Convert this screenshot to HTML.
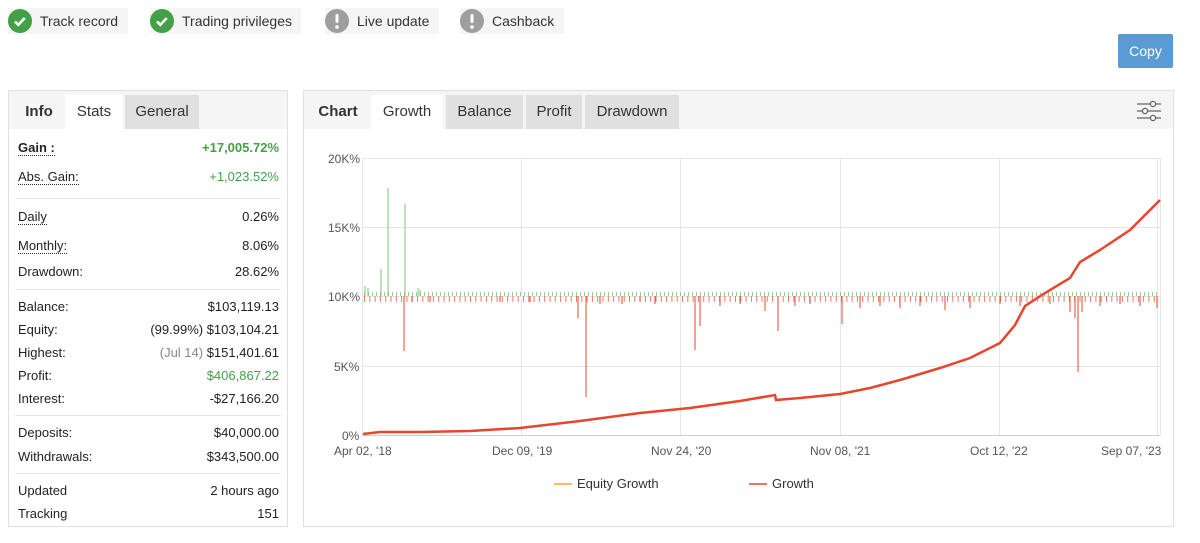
<!DOCTYPE html>
<html><head><meta charset="utf-8"><style>
*{box-sizing:border-box;margin:0;padding:0}
body{width:1200px;height:543px;background:#fff;font-family:"Liberation Sans",sans-serif;color:#222;position:relative;overflow:hidden}
.badge{position:absolute;top:8px;height:26px;background:#f5f5f5;font-size:14px;line-height:26px;padding-left:32px;color:#333}
.badge i{position:absolute;left:0;top:1px;width:24px;height:24px;border-radius:50%}
.ok i{background:#43a047}
.warn i{background:#9e9e9e}
.copy{position:absolute;left:1118px;top:34px;width:55px;height:34px;background:#5b9bd5;color:#fff;font-size:14px;text-align:center;line-height:34px;border-radius:2px}
.panel{position:absolute;border:1px solid #e0e0e0;background:#fff}
.hdr{position:absolute;left:0;top:0;right:0;height:38px;background:#f5f5f5}
.tab{position:absolute;top:4px;height:34px;line-height:34px;font-size:15px;text-align:center;color:#333}
.act{background:#fff}
.gray{background:#e0e0e0}
.r{position:absolute;left:9px;width:261px;font-size:13px;line-height:16px}
.r .v{position:absolute;right:0;top:0}
.u{border-bottom:1px dotted #333}
.g{color:#43a047}
.hr{position:absolute;left:6px;width:266px;height:1px;background:#e6e6e6}
.ax{position:absolute;font-size:12px;color:#555}
</style></head><body>
<div class="badge ok" style="left:8px;width:120px"><i><svg width="24" height="24"><path d="M7 12.5l3.3 3.3 6.5-6.8" stroke="#fff" stroke-width="2.6" fill="none"/></svg></i>Track record</div>
<div class="badge ok" style="left:150px;width:151px"><i><svg width="24" height="24"><path d="M7 12.5l3.3 3.3 6.5-6.8" stroke="#fff" stroke-width="2.6" fill="none"/></svg></i>Trading privileges</div>
<div class="badge warn" style="left:325px;width:114px"><i><svg width="24" height="24"><rect x="10.5" y="5" width="3" height="9" rx="1.2" fill="#fff"/><circle cx="12" cy="18" r="1.8" fill="#fff"/></svg></i>Live update</div>
<div class="badge warn" style="left:460px;width:104px"><i><svg width="24" height="24"><rect x="10.5" y="5" width="3" height="9" rx="1.2" fill="#fff"/><circle cx="12" cy="18" r="1.8" fill="#fff"/></svg></i>Cashback</div>
<div class="copy">Copy</div>

<div class="panel" style="left:8px;top:90px;width:280px;height:437px">
<div class="hdr">
<div class="tab" style="left:4px;width:52px;font-weight:bold">Info</div>
<div class="tab act" style="left:56px;width:58px">Stats</div>
<div class="tab gray" style="left:116px;width:74px">General</div>
</div>
<div class="r" style="top:49px"><b class="u">Gain :</b><b class="v g">+17,005.72%</b></div>
<div class="r" style="top:78px"><span class="u">Abs. Gain:</span><span class="v g">+1,023.52%</span></div>
<div class="hr" style="top:107px"></div>
<div class="r" style="top:118px"><span class="u">Daily</span><span class="v">0.26%</span></div>
<div class="r" style="top:147px"><span class="u">Monthly:</span><span class="v">8.06%</span></div>
<div class="r" style="top:173px">Drawdown:<span class="v">28.62%</span></div>
<div class="hr" style="top:198px"></div>
<div class="r" style="top:208px">Balance:<span class="v">$103,119.13</span></div>
<div class="r" style="top:231px">Equity:<span class="v">(99.99%) $103,104.21</span></div>
<div class="r" style="top:254px">Highest:<span class="v"><span style="color:#888">(Jul 14)</span> $151,401.61</span></div>
<div class="r" style="top:277px">Profit:<span class="v g">$406,867.22</span></div>
<div class="r" style="top:300px">Interest:<span class="v">-$27,166.20</span></div>
<div class="hr" style="top:324px"></div>
<div class="r" style="top:334px">Deposits:<span class="v">$40,000.00</span></div>
<div class="r" style="top:358px">Withdrawals:<span class="v">$343,500.00</span></div>
<div class="hr" style="top:382px"></div>
<div class="r" style="top:392px">Updated<span class="v">2 hours ago</span></div>
<div class="r" style="top:415px">Tracking<span class="v">151</span></div>
</div>

<div class="panel" style="left:303px;top:90px;width:871px;height:437px">
<div class="hdr">
<div class="tab" style="left:6px;width:56px;font-weight:bold">Chart</div>
<div class="tab act" style="left:67px;width:72px">Growth</div>
<div class="tab gray" style="left:142px;width:77px">Balance</div>
<div class="tab gray" style="left:222px;width:56px">Profit</div>
<div class="tab gray" style="left:281px;width:94px">Drawdown</div>
<svg style="position:absolute;left:832px;top:9px" width="26" height="22"><g stroke="#666" stroke-width="1.3" fill="#f5f5f5"><path d="M1 4h24M1 11h24M1 18h24"/><circle cx="17" cy="4" r="2.6"/><circle cx="9" cy="11" r="2.6"/><circle cx="17" cy="18" r="2.6"/></g></svg>
</div>
</div>
<div class="ax" style="left:328px;top:152px">20K%</div>
<div class="ax" style="left:328px;top:221px">15K%</div>
<div class="ax" style="left:328px;top:290px">10K%</div>
<div class="ax" style="left:334px;top:360px">5K%</div>
<div class="ax" style="left:342px;top:429px">0%</div>
<div class="ax" style="left:334px;top:444px">Apr 02, '18</div>
<div class="ax" style="left:492px;top:444px">Dec 09, '19</div>
<div class="ax" style="left:651px;top:444px">Nov 24, '20</div>
<div class="ax" style="left:810px;top:444px">Nov 08, '21</div>
<div class="ax" style="left:970px;top:444px">Oct 12, '22</div>
<div class="ax" style="left:1101px;top:444px">Sep 07, '23</div>
<svg style="position:absolute;left:0;top:0" width="1200" height="543">
<g stroke="#e6e6e6" stroke-width="1" fill="none">
<path d="M362.5 158v277M521.5 158v277M680.5 158v277M840.5 158v277M999.5 158v277M1157.5 158v277M1160.5 158v277"/>
<path d="M362 158.5h798M362 227.5h798M362 296.5h798M362 366.5h798"/>
</g>
<path d="M362 435.5h798" stroke="#ccc"/>
<path d="M364 294h795" stroke="#7cc576" stroke-width="4" stroke-dasharray="1 3" opacity=".8"/>
<path d="M364 299h795" stroke="#e8452c" stroke-width="6" stroke-dasharray="1 4.3" opacity=".7"/>
<path d="M365 296v-10M368 296v-8M381 296v-27M388 296v-108M405 296v-92M418 296v-8M420 296v-6" stroke="#7cc576"/>
<path d="M404 296v55M412 296v6M430 296v6M500 296v6M530 296v6M578 296v22M586 296v101M600 296v8M622 296v8M640 296v6M655 296v8M695 296v54M700 296v30M720 296v10M740 296v8M765 296v15M778 296v35M795 296v10M810 296v8M842 296v28M860 296v12M880 296v10M900 296v12M920 296v10M945 296v14M970 296v12M1000 296v8M1020 296v10M1050 296v8M1070 296v16M1075 296v22M1078 296v76M1082 296v16M1100 296v10M1120 296v8M1140 296v10M1157 296v12" stroke="#e8452c"/>
<path d="M363 434L380 432L420 432L470 431L520 428L580 421L640 413L690 408L740 401L775 395L776 400L800 398L840 394L870 388L900 380L940 368L970 358L1000 343L1015 325L1025 306L1045 293L1070 278L1080 262L1100 250L1130 230L1150 210L1160 200" stroke="#e8452c" stroke-width="2.5" fill="none"/>
<path d="M554 484h18" stroke="#f5a623" stroke-width="1.5"/>
<path d="M749 484h18" stroke="#e8452c" stroke-width="1.5"/>
</svg>
<div class="ax" style="left:577px;top:476px;font-size:13px;color:#333">Equity Growth</div>
<div class="ax" style="left:772px;top:476px;font-size:13px;color:#333">Growth</div>
</body></html>
